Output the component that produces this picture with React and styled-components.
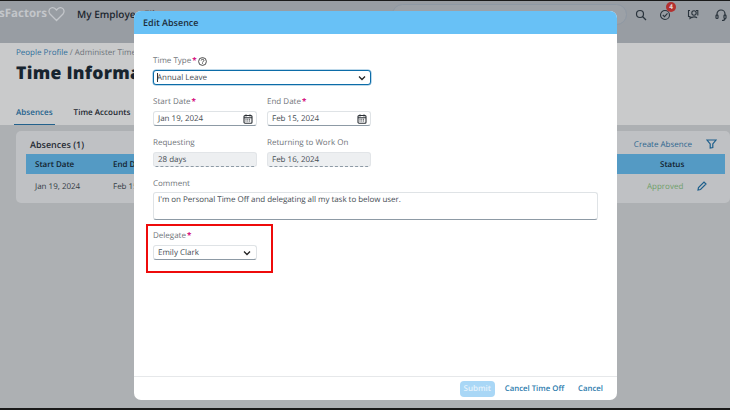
import React from 'react';
import styled, { createGlobalStyle } from 'styled-components';

const Global = createGlobalStyle`
  html, body { margin: 0; padding: 0; background: #111; }
  body { font-family: "Open Sans", "Noto Sans", sans-serif; text-rendering: geometricPrecision; }
  * { box-sizing: border-box; }
`;
const Screen = styled.div`
  position: relative; width: 730px; height: 410px; overflow: hidden; background: #1a1a1a; padding: 1px 0 2px;
`;
const Page = styled.div`
  height: 100%; display: flex; flex-direction: column; background: #c9cacb; overflow: hidden;
`;
const Header = styled.header`
  height: 42px; flex: none; background: #989da3; display: flex; align-items: center; position: relative; padding-bottom: 17px;
`;
const Logo = styled.div`
  display: flex; align-items: center; gap: 1px; width: 77px; flex: none; overflow: hidden; color: #c3c6ca;
  font-size: 11.5px; font-weight: 700; white-space: nowrap;
`;
const LogoText = styled.span`
  margin-left: -1px;
`;
const Employer = styled.div`
  font-size: 10px; font-weight: 600; color: #1d2730; white-space: nowrap;
`;
const SearchPill = styled.div`
  position: absolute; left: 392px; top: 3px; width: 235px; height: 21px; border-radius: 11px; background: #9ca1a7; border: 1px solid #8e98a3;
`;
const HeadIcons = styled.div`
  position: absolute; top: 0; left: 635px; height: 27px; display: flex; align-items: center; gap: 14px; color: #2a343d;
`;
const IconWrap = styled.span`
  position: relative; display: flex; width: ${p => p.$w || 14}px; height: 14px; align-items: center;
  svg { flex: none; }
`;
const Badge = styled.span`
  position: absolute; top: -6px; left: 8px; width: 10px; height: 10px; border-radius: 50%; background: #b3302f; color: #e8d8d8;
  font-size: 6.5px; font-weight: 700; display: flex; align-items: center; justify-content: center;
`;
const TitleArea = styled.div`
  height: 82px; flex: none; padding: 4px 0 0 16px;
`;
const Crumbs = styled.div`
  font-size: 8px; line-height: 12px; color: #6c7279; white-space: nowrap;
  b { font-weight: 400; color: #2f6f9b; }
`;
const Title = styled.h1`
  margin: 1px 0 0; font-size: 17.5px; line-height: 26px; font-weight: 800; color: #17242f; white-space: nowrap; letter-spacing: .3px;
`;
const Tabs = styled.nav`
  display: flex; gap: 17px; margin: 21px 0 0 -2px;
`;
const Tab = styled.span`
  font-size: 8px; line-height: 12px; font-weight: 600; height: 18px; white-space: nowrap; padding: 0 2px; letter-spacing: .03px;
  color: ${p => (p.$on ? '#23618c' : '#1c262e')};
  border-bottom: 1px solid ${p => (p.$on ? '#23618c' : 'transparent')};
`;
const Lower = styled.div`
  flex: 1; background: #adb0b3; padding: 6px 0 0 16px;
`;
const Card = styled.section`
  width: 714px; height: 72px; background: #bfc1c4; border-radius: 5px; display: flex; flex-direction: column; padding: 6px 0 0 10px;
`;
const CardHead = styled.div`
  display: flex; justify-content: space-between; align-items: center; height: 14px; padding-right: 13px;
`;
const CardTitle = styled.h2`
  margin: 0 0 0 4px; font-size: 9px; font-weight: 600; color: #1f2a33;
`;
const CardTools = styled.div`
  display: flex; align-items: center; gap: 14px; font-size: 8px; color: #2c668f;
`;
const Grid = styled.div`
  display: grid; grid-template-columns: 78px 534px 50px 1fr; width: 699px; padding-left: 9px; align-items: center; font-size: 8px; white-space: nowrap;
`;
const HeadRow = styled(Grid)`
  height: 20px; background: #549ac4; margin-top: 3px; font-weight: 600; color: #12222d;
`;
const DataRow = styled(Grid)`
  height: 24px; color: #333c44;
`;
const StatusHead = styled.span`
  grid-column: 3 / 5; padding-left: 13px;
`;
const Approved = styled.span`
  color: #6f9f6a;
`;
const Overlay = styled.div`
  position: absolute; left: 134px; top: 11px; width: 483px; height: 389px; background: #fff; border-radius: 7px; display: flex; flex-direction: column; overflow: hidden;
`;
const ModalHead = styled.div`
  height: 23px; flex: none; background: #68c1f6; display: flex; align-items: center; padding-left: 9px; font-size: 9px; font-weight: 600; color: #1d2d3a;
`;
const ModalBody = styled.div`
  flex: 1; padding: 20px 19px 0; display: flex; flex-direction: column; align-items: flex-start;
`;
const Field = styled.div`
  display: flex; flex-direction: column; width: ${p => p.$w || 104}px;
  margin-top: ${p => p.$mt || 0}px;
`;
const Row = styled.div`
  display: flex; gap: 10px; margin-top: ${p => p.$mt || 0}px;
`;
const Label = styled.label`
  font-size: 8px; line-height: 14px; height: 12px; color: #6f7479; display: flex; align-items: center; gap: 1px; white-space: nowrap; padding-top: 2px;
  i { color: #d6137f; font-style: normal; font-weight: 700; }
`;
const Input = styled.div`
  margin-top: 4px; height: 15px; width: ${p => (p.$w ? `${p.$w}px` : 'auto')}; border: 1px solid #dfe3e6; border-bottom-color: #8d9aa5; border-radius: 3px; background: #fff;
  display: flex; align-items: center; justify-content: space-between; padding: 0 ${p => p.$pr || 3}px 0 4px; font-size: 8px; color: #464d53; white-space: nowrap;
`;
const Focus = styled(Input)`
  border: 1px solid #0c6ca8; box-shadow: 0 0 0 .5px #7fb4d6; padding-left: 3px;
`;
const TextCursor = styled.span`
  position: relative;
  &::before { content: ""; position: absolute; left: 0; top: 1px; bottom: 1px; width: 1px; background: #333; }
`;
const ReadOnly = styled(Input)`
  background: #edeff1; border: 1px solid #e2e5e8; border-bottom: 1px dashed #8d9aa5;
`;
const Area = styled(Input)`
  margin-top: 3px; width: 445px; height: 28px; align-items: flex-start; padding: 1px 4px; letter-spacing: -.04px;
`;
const DelegateBox = styled.div`
  margin: 4px 0 0 -7px; width: 127px; height: 49px; border: 2px solid #ee0b0b; padding: 3px 0 0 5px; display: flex; flex-direction: column;
`;
const Footer = styled.div`
  height: 24px; flex: none; border-top: 1px solid #e6e8ea; display: flex; align-items: center; justify-content: flex-end; gap: 10px; padding-right: 14px;
`;
const Submit = styled.span`
  width: 35px; height: 16px; border-radius: 4px; background: #a9d7f6; color: #e6f3fc; font-size: 8px; font-weight: 600; display: flex; align-items: center; justify-content: center;
`;
const Ghost = styled.span`
  font-size: 7.8px; font-weight: 600; color: #2b7bad; white-space: nowrap; margin-left: ${p => p.$ml || 0}px;
`;

const Chevron = () => (
  <svg width="8" height="6" viewBox="0 0 8 6" fill="none"><path d="M1 1.5 4 4.5 7 1.5" stroke="#222" strokeWidth="1.3" /></svg>
);
const Calendar = () => (
  <svg width="10" height="10" viewBox="0 0 10 10" fill="none" stroke="#2a2f34" strokeWidth="1.1"><rect x="1" y="1.5" width="8" height="7.7" rx="1" /><path d="M1 3.7h8M3 .5v2M7 .5v2" /><path d="M2.5 5.3h5M2.5 7h5" strokeDasharray="1 .8" /></svg>
);

export default function App() {
  return (
    <Screen>
      <Global />
      <Page>
        <Header>
          <Logo>
            <LogoText>sFactors</LogoText>
            <svg width="17" height="16" viewBox="0 0 17 16" fill="none" stroke="#c3c6ca" strokeWidth="1.3"><path d="M8.5 14.5 2 8C.3 6 .8 3 3 2c2-1 4 0 5.5 2C10 2 12 1 14 2c2.2 1 2.7 4 1 6z" /></svg>
          </Logo>
          <Employer>My Employee File</Employer>
          <SearchPill />
          <HeadIcons>
            <IconWrap $w={9}>
              <svg width="12" height="12" viewBox="0 0 12 12" fill="none" stroke="#2a343d" strokeWidth="1.2"><circle cx="5" cy="5" r="3.5" /><path d="M7.5 7.5 11 11" /></svg>
            </IconWrap>
            <IconWrap>
              <svg width="14" height="14" viewBox="0 0 14 14" fill="none" stroke="#2a343d" strokeWidth="1.1"><circle cx="7" cy="7" r="4.5" /><path d="M4.8 7 6.5 8.7 9.5 5.3" /></svg>
              <Badge>4</Badge>
            </IconWrap>
            <IconWrap>
              <svg width="14" height="14" viewBox="0 0 14 14" fill="none" stroke="#2a343d" strokeWidth="1.1"><path d="M4 2.5H2.500v6H4v2l2-1.500" /><circle cx="8" cy="5" r="2.2" /><path d="M5.500 10c.5-1.500 4.500-1.500 5.500 0M10 2.500h1.800v5" /></svg>
            </IconWrap>
            <IconWrap>
              <svg width="14" height="14" viewBox="0 0 14 14" fill="none" stroke="#2a343d" strokeWidth="1.2"><path d="M3 8V6a4 4 0 0 1 8 0v2" /><rect x="2" y="7" width="2" height="3.5" rx=".8" /><rect x="10" y="7" width="2" height="3.5" rx=".8" /><path d="M11 10.500c0 1.500-1.500 2-3 2" /></svg>
            </IconWrap>
          </HeadIcons>
        </Header>
        <TitleArea>
          <Crumbs><b>People Profile</b> / Administer Time</Crumbs>
          <Title>Time Information</Title>
          <Tabs>
            <Tab $on>Absences</Tab>
            <Tab>Time Accounts</Tab>
          </Tabs>
        </TitleArea>
        <Lower>
          <Card>
            <CardHead>
              <CardTitle>Absences (1)</CardTitle>
              <CardTools>
                <span>Create Absence</span>
                <svg width="11" height="10" viewBox="0 0 11 10" fill="none" stroke="#1d5f8c" strokeWidth="1.2"><path d="M1 1h9L6.800 5v3.500L4.200 9V5z" /></svg>
              </CardTools>
            </CardHead>
            <HeadRow><span>Start Date</span><span>End Date</span><StatusHead>Status</StatusHead></HeadRow>
            <DataRow>
              <span>Jan 19, 2024</span>
              <span>Feb 15, 2024</span>
              <Approved>Approved</Approved>
              <svg width="10" height="10" viewBox="0 0 10 10" fill="none" stroke="#1d5f8c" strokeWidth="1.2"><path d="M1 9l.5-2.500L7 1l2 2-5.500 5.500z" /></svg>
            </DataRow>
          </Card>
        </Lower>
      </Page>
      <Overlay>
        <ModalHead>Edit Absence</ModalHead>
        <ModalBody>
          <Field $w={218}>
            <Label>Time Type<i>*</i>
              <svg width="9" height="9" viewBox="0 0 9 9" fill="none" stroke="#222" strokeWidth=".8"><circle cx="4.5" cy="4.5" r="3.9" /><path d="M3.200 3.500c0-1.600 2.700-1.600 2.700 0 0 1-1.400 1-1.400 2.100M4.500 6.300v.7" /></svg>
            </Label>
            <Focus $pr={4}><TextCursor>Annual Leave</TextCursor><Chevron /></Focus>
          </Field>
          <Row $mt={10}>
            <Field><Label>Start Date<i>*</i></Label><Input><span>Jan 19, 2024</span><Calendar /></Input></Field>
            <Field><Label>End Date<i>*</i></Label><Input><span>Feb 15, 2024</span><Calendar /></Input></Field>
          </Row>
          <Row $mt={10}>
            <Field><Label>Requesting</Label><ReadOnly>28 days</ReadOnly></Field>
            <Field><Label>Returning to Work On</Label><ReadOnly>Feb 16, 2024</ReadOnly></Field>
          </Row>
          <Field $w={445} $mt={10}>
            <Label>Comment</Label>
            <Area>I'm on Personal Time Off and delegating all my task to below user.</Area>
          </Field>
          <DelegateBox>
            <Label>Delegate<i>*</i></Label>
            <Input $w={104} $pr={5}><span>Emily Clark</span><Chevron /></Input>
          </DelegateBox>
        </ModalBody>
        <Footer>
          <Submit>Submit</Submit>
          <Ghost>Cancel Time Off</Ghost>
          <Ghost $ml={4}>Cancel</Ghost>
        </Footer>
      </Overlay>
    </Screen>
  );
}
